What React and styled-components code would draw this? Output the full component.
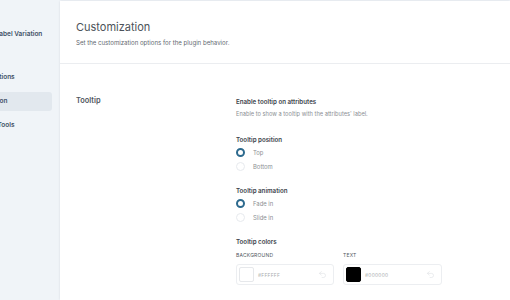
import React from "react";
import styled, { createGlobalStyle } from "styled-components";
import { Undo2 } from "lucide-react";

const Global = createGlobalStyle`
  html, body { margin: 0; padding: 0; background: #f0f4f8; }
  body { font-family: Inter, "Noto Sans", sans-serif; -webkit-font-smoothing: antialiased; }
  * { box-sizing: border-box; }
`;

const Page = styled.div`
  display: flex;
  width: 510px;
  height: 300px;
  overflow: hidden;
  background: #f0f4f8;
`;

const Sidebar = styled.nav`
  width: 60px;
  flex: none;
  overflow: hidden;
  background: #f0f4f8;
  padding-top: 29px;
`;

const NavInner = styled.div`
  margin-left: -48px;
  width: 100px;
  display: flex;
  flex-direction: column;
`;

const Brand = styled.div`
  font-size: 6.5px;
  font-weight: 600;
  color: #3f5166;
  white-space: nowrap;
  height: 10px;
  line-height: 10px;
  margin-left: ${(p) => p.$shift || 0}px;
  margin-bottom: 29px;
`;

const NavItem = styled.div`
  font-size: 6.5px;
  font-weight: 600;
  color: #3f5166;
  white-space: nowrap;
  height: 19px;
  line-height: 19px;
  padding-left: ${(p) => p.$shift || 0}px;
  margin-bottom: 5px;
  width: 100px;
  border-radius: 3px;
  background: ${(p) => (p.$active ? "#e2e8ee" : "transparent")};
`;

const Panel = styled.main`
  flex: 1;
  margin-top: 1px;
  background: #fff;
  box-shadow: 0 0 2px rgba(40, 50, 70, 0.12);
  display: flex;
  flex-direction: column;
`;

const Header = styled.header`
  height: 63px;
  padding: 19px 16px 0;
  border-bottom: 1px solid #ebedf0;
`;

const Title = styled.h1`
  margin: 0;
  font-size: 11px;
  font-weight: 400;
  color: #4b5259;
  line-height: 14px;
`;

const Subtitle = styled.p`
  margin: 5px 0 0;
  font-size: 6.1px;
  color: #646970;
  line-height: 8px;
`;

const Section = styled.section`
  display: grid;
  grid-template-columns: 160px 1fr;
  padding: 32px 16px 0;
`;

const SectionTitle = styled.h2`
  margin: 0;
  font-size: 7.4px;
  font-weight: 600;
  color: #50575e;
  line-height: 10px;
`;

const Fields = styled.div`
  display: flex;
  flex-direction: column;
  padding-top: 1px;
`;

const Field = styled.div`
  margin-bottom: ${(p) => p.$gap ?? 14}px;
`;

const Label = styled.div`
  font-size: 6.2px;
  font-weight: 600;
  color: #3c434a;
  line-height: 9px;
`;

const Help = styled.div`
  margin-top: 4px;
  font-size: 5.7px;
  color: #8c8f94;
  line-height: 8px;
`;

const RadioRow = styled.label`
  display: flex;
  align-items: center;
  height: 13.5px;
  gap: 8px;
  font-size: 5.9px;
  color: #8c8f94;
`;

const RadioDot = styled.span`
  width: 9px;
  height: 9px;
  border-radius: 50%;
  flex: none;
  background: #fff;
  border: ${(p) => (p.$on ? "2.8px solid #2d6a8e" : "1px solid #e7eaee")};
`;

const Options = styled.div`
  margin-top: 2px;
`;

const ColorGrid = styled.div`
  display: grid;
  grid-template-columns: 98px 99px;
  gap: 9px;
  margin-top: 6px;
`;

const ColorCol = styled.div`
  display: flex;
  flex-direction: column;
`;

const SmallCap = styled.div`
  font-size: 5px;
  letter-spacing: 0.2px;
  color: #50575e;
  line-height: 7px;
  margin-bottom: 5px;
`;

const ColorInput = styled.div`
  height: 21px;
  border: 1px solid #eceef1;
  border-radius: 3px;
  display: flex;
  align-items: center;
  padding: 0 6px 0 2px;
  gap: 4px;
`;

const Swatch = styled.span`
  width: 15px;
  height: 15px;
  border-radius: 2px;
  flex: none;
  background: ${(p) => p.$color};
  border: 1px solid ${(p) => (p.$color === "#000000" ? "#000" : "#e6e8eb")};
`;

const Hex = styled.span`
  flex: 1;
  font-size: 4.8px;
  color: #a7aaad;
  letter-spacing: 0.3px;
`;

const Reset = styled(Undo2)`
  color: #dcdfe3;
  flex: none;
`;

function Radio({ on, children }) {
  return (
    <RadioRow>
      <RadioDot $on={on} />
      {children}
    </RadioRow>
  );
}

export default function App() {
  return (
    <Page>
      <Global />
      <Sidebar>
        <NavInner>
          <Brand $shift={19}>Color &amp; Label Variation</Brand>
          <NavItem $shift={12}>General Options</NavItem>
          <NavItem $shift={10} $active>Customization</NavItem>
          <NavItem $shift={12}>Advanced Tools</NavItem>
        </NavInner>
      </Sidebar>
      <Panel>
        <Header>
          <Title>Customization</Title>
          <Subtitle>Set the customization options for the plugin behavior.</Subtitle>
        </Header>
        <Section>
          <SectionTitle>Tooltip</SectionTitle>
          <Fields>
            <Field $gap={17}>
              <Label>Enable tooltip on attributes</Label>
              <Help>Enable to show a tooltip with the attributes' label.</Help>
            </Field>
            <Field $gap={13}>
              <Label>Tooltip position</Label>
              <Options>
                <Radio on>Top</Radio>
                <Radio>Bottom</Radio>
              </Options>
            </Field>
            <Field $gap={13}>
              <Label>Tooltip animation</Label>
              <Options>
                <Radio on>Fade in</Radio>
                <Radio>Slide in</Radio>
              </Options>
            </Field>
            <Field>
              <Label>Tooltip colors</Label>
              <ColorGrid>
                <ColorCol>
                  <SmallCap>BACKGROUND</SmallCap>
                  <ColorInput>
                    <Swatch $color="#ffffff" />
                    <Hex>#FFFFFF</Hex>
                    <Reset size={9} strokeWidth={1.5} />
                  </ColorInput>
                </ColorCol>
                <ColorCol>
                  <SmallCap>TEXT</SmallCap>
                  <ColorInput>
                    <Swatch $color="#000000" />
                    <Hex>#000000</Hex>
                    <Reset size={9} strokeWidth={1.5} />
                  </ColorInput>
                </ColorCol>
              </ColorGrid>
            </Field>
          </Fields>
        </Section>
      </Panel>
    </Page>
  );
}
